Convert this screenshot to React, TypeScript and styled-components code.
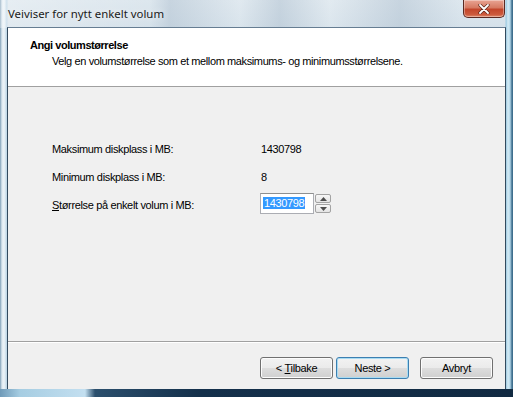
import React from "react";
import styled, { createGlobalStyle } from "styled-components";

const Global = createGlobalStyle`
  html, body { margin: 0; padding: 0; background: #fff; }
  body { font-family: "Liberation Sans", Arial, sans-serif; }
`;

const Window = styled.div`
  width: 513px;
  height: 397px;
  box-sizing: border-box;
  display: flex;
  flex-direction: column;
  background:
    linear-gradient(90deg, #7f9fb6 0px, #dce8f0 2px, #eef4f8 4px, #b9d3e4 7px, rgba(0,0,0,0) 8px, rgba(0,0,0,0) 505px, #9cc9e0 506px, #d5ebf5 508px, #b4d8ea 510px, #3f6f8e 512px),
    linear-gradient(180deg, #dde7ee 0px, #d5e1ea 28px, #c6d9e6 200px, #b7d0e1 397px);
  overflow: hidden;
`;

const TitleBar = styled.div`
  height: 28px;
  display: flex;
  align-items: flex-start;
  justify-content: space-between;
  padding: 0 8px 0 8px;
  box-sizing: border-box;
  background: linear-gradient(90deg, rgba(255,255,255,0.3) 0px, rgba(255,255,255,0) 150px, rgba(150,170,190,0.3) 170px, rgba(255,255,255,0.1) 240px, rgba(150,170,190,0.3) 280px, rgba(255,255,255,0.15) 330px, rgba(150,170,190,0.3) 400px, rgba(255,255,255,0) 460px);
`;

const Title = styled.div`
  font-family: "Noto Sans", "Open Sans", sans-serif;
  font-size: 11.4px;
  color: #1a1a1a;
  padding-top: 5px;
  line-height: 17px;
  text-shadow: 0 0 6px rgba(255,255,255,0.9);
`;

const CloseButton = styled.div`
  width: 42px;
  height: 18px;
  box-sizing: border-box;
  border: 1px solid #5a2a22;
  border-top: none;
  border-radius: 0 0 5px 5px;
  background: linear-gradient(180deg, #e9a493 0%, #d67a62 45%, #c3462b 55%, #cc5a3c 85%, #e08a6c 100%);
  display: flex;
  align-items: center;
  justify-content: center;
  box-shadow: inset 0 0 0 1px rgba(255,255,255,0.35);
`;

const Client = styled.div`
  flex: 1;
  display: flex;
  flex-direction: column;
  background: #f0f0f0;
  border-left: 1px solid #334a5e;
  border-right: 1px solid #334a5e;
  border-top: 1px solid #667d92;
  margin: -1px 7px 0 7px;
  letter-spacing: -0.35px;
`;

const Header = styled.div`
  height: 59px;
  background: #ffffff;
  border-bottom: 1px solid #a0a0a0;
  box-sizing: border-box;
  padding: 11px 0 0 22px;
  font-size: 11px;
  color: #000;
`;

const HeaderTitle = styled.div`
  font-weight: bold;
  line-height: 13px;
  letter-spacing: -0.45px;
`;

const HeaderSub = styled.div`
  padding-left: 22px;
  line-height: 13px;
  margin-top: 3px;
  letter-spacing: -0.39px;
`;

const Body = styled.div`
  flex: 1;
  padding: 56px 0 0 44px;
  display: grid;
  grid-template-columns: 209px auto;
  grid-auto-rows: 28px;
  align-content: start;
  font-size: 11px;
  color: #000;
  border-bottom: 1px solid #a0a0a0;
  box-shadow: 0 1px 0 #ffffff;
`;

const Label = styled.div`
  line-height: 13px;
`;

const Value = styled.div`
  line-height: 13px;
`;

const SpinWrap = styled.div`
  display: flex;
  align-items: flex-start;
  margin-top: -6px;
  margin-left: -1px;
`;

const Input = styled.div`
  width: 54px;
  height: 21px;
  box-sizing: border-box;
  border: 1px solid #abadb3;
  border-top-color: #8e8f8f;
  background: #fff;
  padding: 3px 0 0 2px;
  line-height: 13px;
`;

const Selected = styled.span`
  background: #3399ff;
  color: #fff;
  padding: 0 1px;
`;

const SpinCol = styled.div`
  display: flex;
  flex-direction: column;
  gap: 1px;
  margin-left: 1px;
  margin-top: 1px;
`;

const SpinBtn = styled.div`
  width: 16px;
  height: 9px;
  box-sizing: border-box;
  border: 1px solid #a3a3a3;
  border-radius: 2px;
  background: linear-gradient(180deg, #f7f7f7, #e4e4e4);
  display: flex;
  align-items: center;
  justify-content: center;
`;

const Footer = styled.div`
  height: 46px;
  display: flex;
  align-items: flex-start;
  padding: 14px 0 0 252px;
  box-sizing: border-box;
  margin-top: 1px;
`;

const Button = styled.div<{ $primary?: boolean; $gap?: number }>`
  width: 73px;
  height: 22px;
  box-sizing: border-box;
  margin-left: ${(p) => p.$gap ?? 0}px;
  border: 1px solid ${(p) => (p.$primary ? "#3c7fb1" : "#707070")};
  border-radius: 3px;
  background: linear-gradient(180deg, #f2f2f2 0%, #ebebeb 48%, #dddddd 52%, #cfcfcf 100%);
  box-shadow: inset 0 0 0 1px ${(p) => (p.$primary ? "#a8dbf2" : "#fcfcfc")};
  display: flex;
  align-items: center;
  justify-content: center;
  font-size: 11px;
  color: #000;
`;

const BottomEdge = styled.div`
  height: 8px;
  background: linear-gradient(90deg, #6f9ab8 0px, #a6cde2 20px, #c3dff0 85px, #2b4f6d 95px, #14304b 200px, #112a42 513px);
`;

export default function App() {
  return (
    <>
      <Global />
      <Window>
        <TitleBar>
          <Title>Veiviser for nytt enkelt volum</Title>
          <CloseButton>
            <svg width="12" height="10" viewBox="0 0 12 10">
              <path d="M2 1 L10 9 M10 1 L2 9" stroke="#5a2418" strokeWidth="3.2" strokeLinecap="round" />
              <path d="M2 1 L10 9 M10 1 L2 9" stroke="#ffffff" strokeWidth="1.8" strokeLinecap="round" />
            </svg>
          </CloseButton>
        </TitleBar>
        <Client>
          <Header>
            <HeaderTitle>Angi volumstørrelse</HeaderTitle>
            <HeaderSub>Velg en volumstørrelse som et mellom maksimums- og minimumsstørrelsene.</HeaderSub>
          </Header>
          <Body>
            <Label>Maksimum diskplass i MB:</Label>
            <Value>1430798</Value>
            <Label>Minimum diskplass i MB:</Label>
            <Value>8</Value>
            <Label><u>S</u>tørrelse på enkelt volum i MB:</Label>
            <SpinWrap>
              <Input><Selected>1430798</Selected></Input>
              <SpinCol>
                <SpinBtn>
                  <svg width="7" height="4" viewBox="0 0 7 4"><path d="M0 4 L3.5 0 L7 4 Z" fill="#4d4d4d" /></svg>
                </SpinBtn>
                <SpinBtn>
                  <svg width="7" height="4" viewBox="0 0 7 4"><path d="M0 0 L3.5 4 L7 0 Z" fill="#4d4d4d" /></svg>
                </SpinBtn>
              </SpinCol>
            </SpinWrap>
          </Body>
          <Footer>
            <Button><span>&lt;&nbsp;<u>T</u>ilbake</span></Button>
            <Button $primary $gap={3}>Neste &gt;</Button>
            <Button $gap={11}>Avbryt</Button>
          </Footer>
        </Client>
        <BottomEdge />
      </Window>
    </>
  );
}
